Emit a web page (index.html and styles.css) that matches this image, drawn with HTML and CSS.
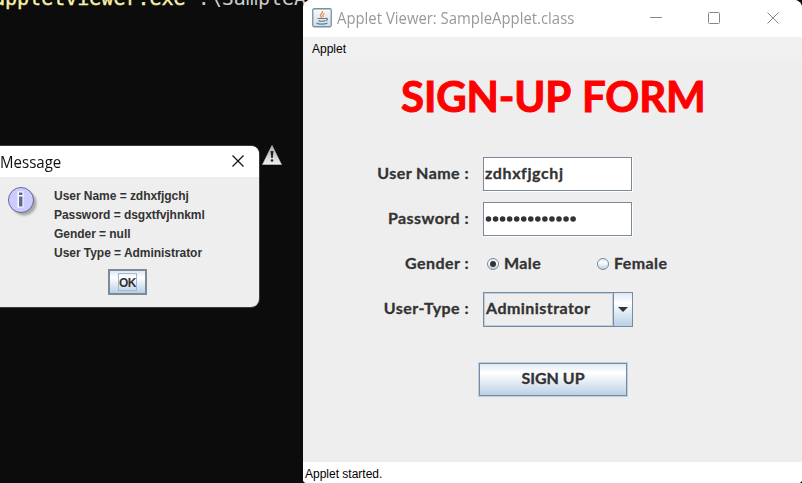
FILE: index.html
```html
<!DOCTYPE html>
<html lang="en">
<head>
<meta charset="utf-8">
<title>Applet Viewer: SampleApplet.class</title>
<link rel="stylesheet" href="styles.css">
</head>
<body>
<div class="terminal"><span class="command">appletviewer.exe</span> .\SampleApplet.java</div>

<section class="dialog">
  <header class="dialog-bar">
    <span class="dialog-title">Message</span>
    <svg class="dialog-close" width="12" height="12" viewBox="0 0 12 12"><path d="M.5.5l11 11M11.5.5l-11 11" stroke="#111" stroke-width="1.2"/></svg>
  </header>
  <div class="dialog-body">
    <svg class="info" width="34" height="34" viewBox="0 0 34 34">
      <defs><filter id="soft"><feGaussianBlur stdDeviation="1.3"/></filter></defs>
      <circle cx="17" cy="17" r="12.5" fill="#777" opacity=".6" filter="url(#soft)"/>
      <circle cx="14" cy="14" r="12.5" fill="#ccccff" stroke="#666699"/>
      <path d="M10.5 5.500h6v4h-6zM10.500 9.500h6v12h-6z" fill="#fff"/>
      <path d="M12 6.500h3.500v2.500h-3.500zM12 10.500h3.500v10h-3.500z" fill="#666699"/>
    </svg>
    <div class="dialog-lines">
      <div>User Name = zdhxfjgchj</div>
      <div>Password = dsgxtfvjhnkml</div>
      <div>Gender = null</div>
      <div>User Type = Administrator</div>
    </div>
  </div>
  <button class="ok"><span>OK</span></button>
</section>

<svg class="warning" width="20" height="20" viewBox="0 0 20 20">
  <defs><linearGradient id="w" x2="0" y2="1"><stop stop-color="#aaa"/><stop offset="1" stop-color="#f2f2f2"/></linearGradient></defs>
  <path d="M10 .5l9.500 19h-19z" fill="url(#w)" stroke="#bbb" stroke-width=".7"/>
  <path d="M8.500 6h3l-.8 7h-1.400z" fill="#222"/><circle cx="10" cy="15.500" r="1.300" fill="#222"/>
</svg>

<main class="window">
  <header class="titlebar">
    <svg class="java" width="20" height="20" viewBox="0 0 20 20">
      <defs><linearGradient id="j" x2="0" y2="1"><stop stop-color="#f8f9fa"/><stop offset="1" stop-color="#d3dce3"/></linearGradient></defs>
      <rect x=".75" y=".75" width="18.500" height="18" rx="1.500" fill="url(#j)" stroke="#7890a4" stroke-width="1.300"/>
      <path d="M10.500 3c1 2-3 3-2 5l1.500 2M12.500 5.500c-2 1-2 2-1 3.500" fill="none" stroke="#ee8c48" stroke-width="1.300"/>
      <path d="M5.500 10.500h8M6.500 12.500c1.500 1 5 1 6.500 0M13.500 10.500c3-.5 2 2 0 2.500M4.500 15c2 1.500 8 1.500 11 0" fill="none" stroke="#58809d" stroke-width="1.200"/>
    </svg>
    <span class="window-title">Applet Viewer: SampleApplet.class</span>
    <svg class="controls" width="130" height="12" viewBox="0 0 130 12" fill="none" stroke="#888">
      <path d="M0 5.500h12M117.500.5l11 11M128.500.5l-11 11"/><rect x="58.500" y=".5" width="11" height="11" rx="1"/>
    </svg>
  </header>
  <nav class="menubar"><span>Applet</span></nav>
  <div class="applet">
    <h1>SIGN-UP FORM</h1>
    <form class="form">
      <label>User Name :</label>
      <div class="field"><span class="value-name">zdhxfjgchj</span></div>
      <label>Password :</label>
      <div class="field"><svg width="93" height="8" viewBox="0 0 93 8"><path d="M3.500 4h89" stroke="#333" stroke-width="5.600" stroke-linecap="round" stroke-dasharray="0 7.050"/></svg></div>
      <label>Gender :</label>
      <div class="radios">
        <div class="option"><i class="radio checked"></i><span>Male</span></div>
        <div class="option"><i class="radio"></i><span>Female</span></div>
      </div>
      <label>User-Type :</label>
      <div class="combo"><div class="combo-value"><span>Administrator</span></div><div class="combo-arrow"><svg width="10" height="5" viewBox="0 0 10 5"><path d="M0 0h10L5 5z" fill="#333"/></svg></div></div>
    </form>
    <button class="signup" type="button"><span>SIGN UP</span></button>
  </div>
  <footer class="status"><span>Applet started.</span></footer>
</main>
</body>
</html>
```
FILE: styles.css
```css
* { box-sizing: border-box; }
body {
  margin: 0;
  width: 802px;
  height: 483px;
  position: relative;
  overflow: hidden;
  background: #0c0c0c;
  color: #333;
  font-family: "Liberation Sans", sans-serif;
}
span { display: inline-block; white-space: nowrap; }
svg { display: block; flex: none; }
button { padding: 0; color: #333; }

.terminal {
  margin: -14px 0 0 -7px;
  color: #ccc;
  font: 20px/24px "DejaVu Sans Mono", monospace;
  white-space: pre;
}
.command { color: #f9f1a5; -webkit-text-stroke: .4px #f9f1a5; }

.dialog {
  position: absolute;
  left: -10px;
  top: 146px;
  width: 269px;
  height: 161px;
  border-radius: 8px;
  overflow: hidden;
  background: #eee;
  box-shadow: 0 0 0 1px #3a3a3a;
}
.dialog-bar {
  display: flex;
  justify-content: space-between;
  height: 31px;
  padding: 9px 15px 0 10px;
  background: #fff;
}
.dialog-title {
  color: #111;
  font: 16px/14px "Open Sans", sans-serif;
  transform: scaleX(.94);
  transform-origin: left;
}
.dialog-body { display: flex; padding: 10px 0 0 17px; }
.info { margin-top: -1px; }
.dialog-lines { padding-left: 13px; font: bold 12px/19px "Liberation Sans", sans-serif; letter-spacing: -.04px; }
.ok {
  display: flex;
  align-items: center;
  justify-content: center;
  margin: 6px 0 0 118px;
  width: 39px;
  height: 26px;
  border: 2px solid #7a8a99;
  background: linear-gradient(#dde8f3, #fff 30%, #b8cfe5);
  font: bold 12px/15px "Liberation Sans", sans-serif;
}
.ok span { width: 19px; height: 18px; border: 1px solid #a3b8cc; line-height: 18px; letter-spacing: -.5px; }
.warning { position: absolute; left: 262px; top: 145px; }

.window {
  position: absolute;
  left: 303px;
  top: 0;
  width: 499px;
  height: 483px;
  display: flex;
  flex-direction: column;
  border-radius: 8px 8px 4px 4px;
  overflow: hidden;
  background: #eee;
}
.titlebar { display: flex; height: 37px; padding: 8px 0 0 9px; background: #fff; }
.window-title {
  margin-left: 5px;
  width: 238px;
  color: #999;
  font: 16px/20px "Open Sans", sans-serif;
  transform: scaleX(.93);
  transform-origin: left;
}
.controls { margin: 4px 0 0 75px; }
.menubar {
  height: 25px;
  padding-left: 9px;
  background: #f0f0f0;
  color: #000;
  font-size: 12px;
  line-height: 24px;
}
.applet { flex: 1; font-family: Lato, sans-serif; font-weight: 700; }
h1 {
  margin: 7px 0 0 98px;
  color: red;
  font-size: 42px;
  line-height: 54px;
  letter-spacing: -.15px;
  word-spacing: 2px;
  -webkit-text-stroke: 1px red;
}
.form {
  display: grid;
  grid-template-columns: 166px 230px;
  grid-template-rows: 34px 34px 34px 35px;
  column-gap: 14px;
  row-gap: 11px;
  margin-top: 34px;
  font-size: 16px;
  letter-spacing: .4px;
  -webkit-text-stroke: .3px #333;
}
label { text-align: right; line-height: 32px; letter-spacing: .45px; }
.field {
  display: flex;
  align-items: center;
  width: 149px;
  padding-left: 1px;
  border: 1px solid #7a8a99;
  background: #fff;
  box-shadow: 1px 1px 0 #fff;
}
.value-name { margin-top: -3px; letter-spacing: .6px; }
.radios { display: flex; align-items: center; padding-left: 4px; }
.option { display: flex; flex: none; align-items: center; gap: 5px; width: 110px; }
.option span { margin-top: -4px; }
.radio {
  display: flex;
  flex: none;
  width: 12px;
  height: 12px;
  border: 1px solid #7a8a99;
  border-radius: 50%;
  background: linear-gradient(#dde8f3, #fff 35%, #b8cfe5);
}
.checked::after { content: ""; width: 6px; height: 6px; margin: 2px; border-radius: 50%; background: #333; }
.combo { display: flex; width: 150px; border: 1px solid #7a8a99; }
.combo-value { width: 129px; border: 1px solid #b8cfe5; padding-left: 1px; line-height: 28px; letter-spacing: .45px; }
.combo-arrow {
  flex: 1;
  display: flex;
  align-items: center;
  justify-content: center;
  border-left: 1px solid #7a8a99;
  background: linear-gradient(#dde8f3, #fff 30%, #b8cfe5);
}
.signup {
  display: block;
  margin: 35px 0 0 175px;
  width: 150px;
  height: 35px;
  padding-bottom: 3px;
  border: 1px solid #b8cfe5;
  outline: 1px solid #7a8a99;
  outline-offset: -2px;
  background: linear-gradient(#dde8f3, #fff 30%, #b8cfe5);
  font: bold 16px/20px Lato, sans-serif;
  -webkit-text-stroke: .3px #333;
}
.status { height: 21px; padding-left: 2px; background: #fff; color: #000; font-size: 12px; line-height: 24px; }
```
